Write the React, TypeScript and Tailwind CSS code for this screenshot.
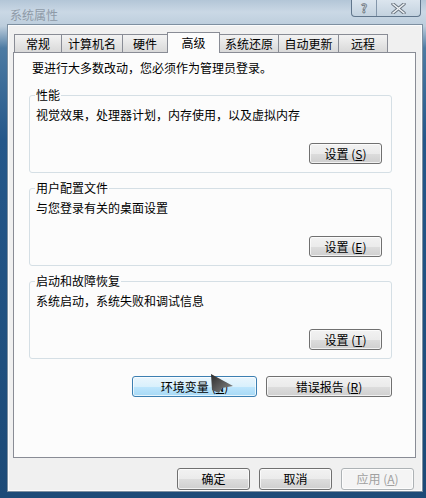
const font = { fontFamily: '"Noto Sans CJK SC", "Liberation Sans", sans-serif' };

const tabs = [
  { label: '常规', w: 'w-[48px]' },
  { label: '计算机名', w: 'w-[62px]' },
  { label: '硬件', w: 'w-[46px]' },
  { label: '高级', w: 'w-[53px]', active: true },
  { label: '系统还原', w: 'w-[60px]' },
  { label: '自动更新', w: 'w-[61px]' },
  { label: '远程', w: 'w-[50px]' },
];

const Btn = ({ children, w, h = 'h-[21px]', hot = false, disabled = false }: { children: React.ReactNode; w: string; h?: string; hot?: boolean; disabled?: boolean }) => {
  let look = 'border-[#707070] bg-[linear-gradient(to_bottom,#f2f2f2_0%,#ebebeb_50%,#dddddd_51%,#cfcfcf_100%)] text-black';
  if (hot) look = 'border-[#3c7fb1] bg-[linear-gradient(to_bottom,#eaf6fd_0%,#d9f0fc_50%,#bee6fd_51%,#a7d9f5_100%)] text-black';
  if (disabled) look = 'border-[#adb2b5] bg-[#f4f4f4] text-[#a0a0a0]';
  return (
    <div className={`${w} ${h} ${look} flex items-center justify-center rounded-[3px] border text-[12px] leading-[14px] shadow-[inset_0_0_0_1px_rgba(255,255,255,0.7)]`}>
      {children}
    </div>
  );
};

const Group = ({ title, text, btn }: { title: string; text: string; btn: React.ReactNode }) => (
  <div className="relative flex h-[78px] w-[363px] flex-col rounded-[3px] border border-[#d5dfe5]">
    <span className="absolute -top-[8px] left-[5px] bg-[#fcfcfc] px-[1px] text-[12px] leading-[14px]">{title}</span>
    <p className="pl-[6px] pt-[12px] text-[12px] leading-[14px]">{text}</p>
    <div className="mt-auto flex justify-end pb-[8px] pr-[9px]">
      <Btn w="w-[73px]">{btn}</Btn>
    </div>
  </div>
);

export default function App() {
  return (
    <div
      style={font}
      className="relative flex h-[498px] w-[426px] flex-col overflow-hidden bg-[linear-gradient(to_bottom,#b3c6d7_0px,#cad8e5_12px,#bccddc_26px,#4d7ba3_48px,#24578a_140px,#1c4a77_100%)] pb-[6px] pl-[7px] pr-[3px] text-black"
    >
      {/* title bar */}
      <div className="flex h-[24px] items-start justify-between">
        <span className="pl-[3px] pt-[8px] text-[12px] leading-[14px] text-[#8e9aa7]">系统属性</span>
        <div className="mr-[2px] flex h-[17px] overflow-hidden rounded-b-[4px] border border-t-0 border-[#61768c] bg-[linear-gradient(to_bottom,#dbe5ee,#c3d2df)]">
          <div className="flex w-[25px] justify-center border-r border-[#8396aa] text-[12px] font-bold leading-[16px] text-[#eef2f5] [-webkit-text-stroke:0.8px_#6b7580]">
            ?
          </div>
          <div className="flex w-[43px] items-center justify-center">
            <svg width="15" height="11" viewBox="0 0 15 11">
              <path d="M2 1 L13 10 M13 1 L2 10" stroke="#6b7580" strokeWidth="3.4" strokeLinecap="round" />
              <path d="M2 1 L13 10 M13 1 L2 10" stroke="#eef2f5" strokeWidth="1.6" strokeLinecap="round" />
            </svg>
          </div>
        </div>
      </div>

      {/* client area */}
      <div className="flex flex-1 flex-col border border-[#7d8fa0] bg-[#f0f0f0] pl-[5px] pr-[6px] pt-[7px] shadow-[inset_0_0_0_1px_#fafbfc]">
        <div className="relative z-10 flex h-[20px] items-end pl-[1px]">
          {tabs.map((t, i) =>
            t.active ? (
              <div
                key={t.label}
                className={`${t.w} -mb-px flex h-[21px] items-start justify-center border border-b-0 border-[#898c95] bg-[#fcfcfc] pt-[3px] text-[12px] leading-[14px] ${i ? '-ml-px' : ''}`}
              >
                {t.label}
              </div>
            ) : (
              <div
                key={t.label}
                className={`${t.w} flex h-[18px] items-center justify-center border border-b-0 border-[#898c95] bg-[linear-gradient(to_bottom,#f3f3f3,#e3e3e3_60%,#d9d9d9)] text-[12px] leading-[14px] ${i ? '-ml-px' : ''}`}
              >
                {t.label}
              </div>
            )
          )}
        </div>

        <div className="flex h-[406px] flex-col border border-[#898c95] bg-[#fcfcfc] pl-[15px] pt-[8px]">
          <p className="pl-[3px] text-[12px] leading-[14px]">要进行大多数改动，您必须作为管理员登录。</p>
          <div className="mt-[20px] flex flex-col gap-[15px]">
            <Group title="性能" text="视觉效果，处理器计划，内存使用，以及虚拟内存" btn={<>设置 (<u>S</u>)</>} />
            <Group title="用户配置文件" text="与您登录有关的桌面设置" btn={<>设置 (<u>E</u>)</>} />
            <Group title="启动和故障恢复" text="系统启动，系统失败和调试信息" btn={<>设置 (<u>T</u>)</>} />
          </div>
          <div className="mt-[17px] flex w-[363px] justify-end gap-[9px]">
            <Btn w="w-[125px]" hot>
              环境变量 (<u>N</u>)
            </Btn>
            <Btn w="w-[126px]">
              错误报告 (<u>R</u>)
            </Btn>
          </div>
        </div>

        <div className="mr-[2px] mt-[10px] flex justify-end gap-[9px]">
          <Btn w="w-[73px]" h="h-[22px]">确定</Btn>
          <Btn w="w-[73px]" h="h-[22px]">取消</Btn>
          <Btn w="w-[73px]" h="h-[22px]" disabled>
            应用 (<u>A</u>)
          </Btn>
        </div>
      </div>

      {/* mouse pointer */}
      <svg className="absolute left-[209px] top-[372px]" width="26" height="24" viewBox="0 0 26 24">
        <defs>
          <linearGradient id="cur" x1="0" y1="0" x2="1" y2="1">
            <stop offset="0" stopColor="#2b2b2b" />
            <stop offset="1" stopColor="#8a8a8a" />
          </linearGradient>
        </defs>
        <path d="M2 2 L24 14 L13 16 L10 21 L3 18 Z" fill="url(#cur)" />
      </svg>
    </div>
  );
}
